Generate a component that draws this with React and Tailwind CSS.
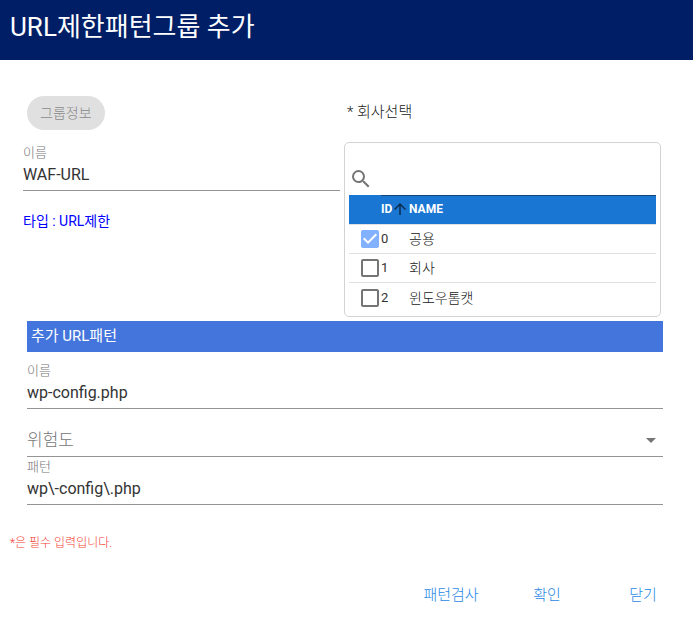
import { useState } from "react";

const companies = [
  { id: 0, name: "공용", locked: true },
  { id: 1, name: "회사" },
  { id: 2, name: "윈도우톰캣" },
];

function TextField({ id, label, value, onChange }) {
  return (
    <div className="flex flex-col border-b border-[#949494]">
      <label htmlFor={id} className="text-[13px] leading-5 font-light text-[#757575]">
        {label}
      </label>
      <input
        id={id}
        type="text"
        value={value}
        onChange={(e) => onChange(e.target.value)}
        className="h-[27px] w-full bg-transparent pb-1 text-base text-[#333333] outline-none"
      />
    </div>
  );
}

function CompanyCheckbox({ label, checked, disabled, onChange }) {
  return (
    <span className="grid h-6 w-6">
      <input
        type="checkbox"
        aria-label={label}
        checked={checked}
        disabled={disabled}
        onChange={onChange}
        className="col-start-1 row-start-1 h-6 w-6 appearance-none"
      />
      <svg
        viewBox="0 0 24 24"
        className={
          checked
            ? "pointer-events-none col-start-1 row-start-1 h-6 w-6 fill-[#82b1ff]"
            : "pointer-events-none col-start-1 row-start-1 h-6 w-6 fill-[#757575]"
        }
      >
        {checked ? (
          <path d="M19 3H5c-1.11 0-2 .9-2 2v14c0 1.1.89 2 2 2h14c1.11 0 2-.9 2-2V5c0-1.1-.89-2-2-2zm-9 14l-5-5 1.41-1.41L10 14.17l7.59-7.59L19 8l-9 9z" />
        ) : (
          <path d="M19 5v14H5V5h14m0-2H5c-1.1 0-2 .9-2 2v14c0 1.1.9 2 2 2h14c1.1 0 2-.9 2-2V5c0-1.1-.9-2-2-2z" />
        )}
      </svg>
    </span>
  );
}

function CompanyTable() {
  const [search, setSearch] = useState("");
  const [selected, setSelected] = useState([0]);

  const toggle = (id) => {
    setSelected(
      selected.includes(id)
        ? selected.filter((s) => s !== id)
        : [...selected, id]
    );
  };

  return (
    <div className="rounded-[5px] border border-[#d3d3d3] px-1 pb-1">
      <div className="flex items-center pt-6 pb-1">
        <label htmlFor="company-search" aria-label="Search">
          <svg viewBox="0 0 24 24" className="h-6 w-6 fill-[#757575]">
            <path d="M15.5 14h-.79l-.28-.27A6.471 6.471 0 0 0 16 9.5 6.5 6.5 0 1 0 9.5 16c1.61 0 3.09-.59 4.23-1.57l.27.28v.79l5 4.99L20.49 19l-4.99-5zm-6 0C7.01 14 5 11.99 5 9.5S7.01 5 9.5 5 14 7.01 14 9.5 11.99 14 9.5 14z" />
          </svg>
        </label>
        <input
          id="company-search"
          type="text"
          value={search}
          onChange={(e) => setSearch(e.target.value)}
          className="h-6 min-w-0 flex-1 bg-transparent text-sm outline-none"
        />
      </div>
      <table className="w-full table-fixed border-separate border-spacing-0 text-left">
        <thead>
          <tr className="h-[30px] bg-[#1976d2] text-xs text-white">
            <th className="w-8 border-b border-[#e0e0e0] p-0"></th>
            <th className="w-7 border-t border-b border-t-[#154577] border-b-[#e0e0e0] p-0 pb-0.5 font-bold">
              <span className="flex items-center gap-0.5">
                ID
                <svg viewBox="4 4 16 16" className="h-3 w-3 shrink-0 fill-[#0c2c4c]">
                  <path d="M4 12l1.41 1.41L11 7.83V20h2V7.83l5.58 5.59L20 12l-8-8-8 8z" />
                </svg>
              </span>
            </th>
            <th className="border-t border-b border-t-[#154577] border-b-[#e0e0e0] p-0 pb-0.5 font-bold">
              NAME
            </th>
          </tr>
        </thead>
        <tbody>
          {companies
            .filter((c) => c.name.includes(search))
            .map((c) => (
              <tr key={c.id} className="group h-[29px] text-[13px] leading-5 text-[#333333]">
                <td className="border-b border-[#e0e0e0] p-0 pl-[9px] group-last:border-b-0">
                  <CompanyCheckbox
                    label={c.name}
                    checked={selected.includes(c.id)}
                    disabled={c.locked}
                    onChange={() => toggle(c.id)}
                  />
                </td>
                <td className="border-b border-[#e0e0e0] p-0 group-last:border-b-0">{c.id}</td>
                <td className="border-b border-[#e0e0e0] p-0 text-sm font-light text-[#212121] group-last:border-b-0">
                  {c.name}
                </td>
              </tr>
            ))}
        </tbody>
      </table>
    </div>
  );
}

export default function App() {
  const [groupName, setGroupName] = useState("WAF-URL");
  const [patternName, setPatternName] = useState("wp-config.php");
  const [risk, setRisk] = useState("");
  const [pattern, setPattern] = useState("wp\\-config\\.php");

  return (
    <div className="bg-white font-[Roboto,'Noto_Sans_CJK_KR',sans-serif]">
      <header className="flex h-[60px] items-center bg-[#001e66] px-2.5 pb-1.5">
        <h1 className="text-[26px] leading-8 font-normal text-white">
          URL제한패턴그룹 추가
        </h1>
      </header>

      <main className="pt-9">
        <div className="grid grid-cols-2 gap-1 pr-8 pl-[23px]">
          <section>
            <button
              type="button"
              disabled
              className="ml-1 flex h-[34px] items-center rounded-full bg-[#e0e0e0] px-[13px] text-sm font-light text-[#8a8a8a]"
            >
              그룹정보
            </button>
            <div className="pt-[13px]">
              <TextField
                id="group-name"
                label="이름"
                value={groupName}
                onChange={setGroupName}
              />
            </div>
            <p className="pt-5 text-sm leading-5 text-[#0000ff]">타입 : URL제한</p>
          </section>

          <section>
            <h2 className="pt-1 pb-[18px] pl-[3px] text-[15px] leading-6 font-light text-[#212121]">
              * 회사선택
            </h2>
            <CompanyTable />
          </section>
        </div>

        <section className="pt-1 pr-[30px] pl-[27px]">
          <h2 className="mb-[9px] bg-[#4475dc] px-1 text-[15px] leading-[31px] font-normal text-white">
            추가 URL패턴
          </h2>
          <TextField
            id="pattern-name"
            label="이름"
            value={patternName}
            onChange={setPatternName}
          />
          <div className="grid h-12 items-center border-b border-[#949494] pt-3.5">
            <select
              aria-label="위험도"
              value={risk}
              onChange={(e) => setRisk(e.target.value)}
              className="col-start-1 row-start-1 w-full appearance-none bg-transparent text-[17px] leading-6 font-light text-[#757575] outline-none"
            >
              <option value="">위험도</option>
              <option value="high">상</option>
              <option value="medium">중</option>
              <option value="low">하</option>
            </select>
            <svg
              viewBox="0 0 24 24"
              className="pointer-events-none col-start-1 row-start-1 h-6 w-6 justify-self-end fill-[#757575]"
            >
              <path d="M7 10l5 5 5-5z" />
            </svg>
          </div>
          <TextField
            id="pattern"
            label="패턴"
            value={pattern}
            onChange={setPattern}
          />
        </section>

        <p className="px-2.5 pt-7 text-xs leading-5 font-light text-[#f44336]">
          *은 필수 입력입니다.
        </p>

        <div className="flex justify-end pt-6 pr-0.5 text-[15px] text-[#1e88e5]">
          <button type="button" className="h-9 w-24 font-light">패턴검사</button>
          <button type="button" className="h-9 w-24 font-light">확인</button>
          <button type="button" className="h-9 w-24 font-light">닫기</button>
        </div>
      </main>
    </div>
  );
}
